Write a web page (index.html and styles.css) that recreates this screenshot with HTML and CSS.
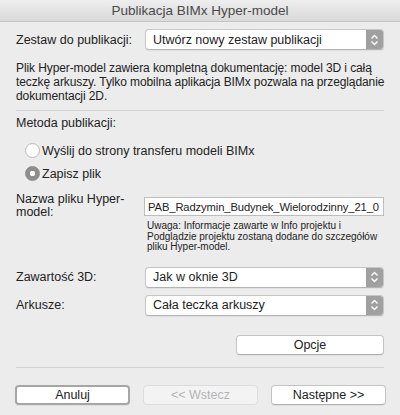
FILE: index.html
```html
<!DOCTYPE html>
<html>
  <head>
    <title>Publikacja BIMx Hyper-model</title>
    <link rel="stylesheet" href="styles.css">
  </head>
  <body>
    <div class="window">
      <!-- Title bar -->
      <div class="titlebar">Publikacja BIMx Hyper-model</div>

      <div class="content">
        <!-- Publication set -->
        <div class="row row-set">
          <span class="label">Zestaw do publikacji:</span>
          <div class="popup">
            <span class="popup-text">Utwórz nowy zestaw publikacji</span>
            <span class="stepper">
              <svg width="9" height="12" viewBox="0 0 9 12">
                <path d="M1.5 4.5 L4.5 1.5 L7.5 4.5 M1.5 7.5 L4.5 10.5 L7.5 7.5" fill="none" stroke="#fff" stroke-width="1.4"/>
              </svg>
            </span>
          </div>
        </div>

        <p class="description">
          Plik Hyper-model zawiera kompletną dokumentację: model 3D i całą<br>
          teczkę arkuszy. Tylko mobilna aplikacja BIMx pozwala na przeglądanie<br>
          dokumentacji 2D.
        </p>

        <div class="separator"></div>

        <!-- Method -->
        <div class="section-title">Metoda publikacji:</div>
        <div class="radio-group">
          <label class="radio">
            <span class="radio-dot"></span>
            Wyślij do strony transferu modeli BIMx
          </label>
          <label class="radio checked">
            <span class="radio-dot"></span>
            Zapisz plik
          </label>
        </div>

        <!-- File name -->
        <div class="row row-file">
          <span class="label label-wrap">Nazwa pliku Hyper-<br>model:</span>
          <div class="field-col">
            <div class="text-input">PAB_Radzymin_Budynek_Wielorodzinny_21_0</div>
            <p class="note">
              Uwaga: Informacje zawarte w Info projektu i<br>
              Podglądzie projektu zostaną dodane do szczegółów<br>
              pliku Hyper-model.
            </p>
          </div>
        </div>

        <div class="row row-3d">
          <span class="label">Zawartość 3D:</span>
          <div class="popup">
            <span class="popup-text">Jak w oknie 3D</span>
            <span class="stepper">
              <svg width="9" height="12" viewBox="0 0 9 12">
                <path d="M1.5 4.5 L4.5 1.5 L7.5 4.5 M1.5 7.5 L4.5 10.5 L7.5 7.5" fill="none" stroke="#fff" stroke-width="1.4"/>
              </svg>
            </span>
          </div>
        </div>

        <div class="row row-sheets">
          <span class="label">Arkusze:</span>
          <div class="popup">
            <span class="popup-text">Cała teczka arkuszy</span>
            <span class="stepper">
              <svg width="9" height="12" viewBox="0 0 9 12">
                <path d="M1.5 4.5 L4.5 1.5 L7.5 4.5 M1.5 7.5 L4.5 10.5 L7.5 7.5" fill="none" stroke="#fff" stroke-width="1.4"/>
              </svg>
            </span>
          </div>
        </div>

        <div class="options-row">
          <button class="button button-options">Opcje</button>
        </div>

        <div class="separator separator-bottom"></div>

        <!-- Footer buttons -->
        <div class="footer">
          <button class="button button-default">Anuluj</button>
          <button class="button" disabled>&lt;&lt; Wstecz</button>
          <button class="button">Następne &gt;&gt;</button>
        </div>
      </div>
    </div>
  </body>
</html>
```

FILE: styles.css
```css
body {
  margin: 0;
  padding: 0;
  font-family: "Liberation Sans", Arial, sans-serif;
  font-size: 12px;
  color: #222;
}
.window {
  width: 400px;
  height: 415px;
  background-color: #ececec;
  overflow: hidden;
}
.titlebar {
  height: 21px;
  line-height: 22px;
  text-align: center;
  font-size: 13.5px;
  color: #4a4a4a;
  background: linear-gradient(#eeeeee, #d9d9d9);
  border-bottom: 1px solid #c4c4c4;
}
.content {
  padding: 0 16px;
}
.row {
  display: grid;
  grid-template-columns: 129px minmax(0, 1fr);
  align-items: center;
}
.row-set {
  margin-top: 7px;
}
.popup {
  height: 19px;
  display: flex;
  align-items: center;
  justify-content: space-between;
  background-color: #fff;
  border: 1px solid #c6c6c6;
  border-bottom-color: #b4b4b4;
  border-radius: 4px;
  box-shadow: 0 1px 1px rgba(0, 0, 0, 0.06);
  overflow: hidden;
}
.popup-text {
  padding-left: 7px;
  font-size: 12.5px;
}
.stepper {
  width: 17px;
  height: 19px;
  display: flex;
  align-items: center;
  justify-content: center;
  background-color: #a0a0a0;
}
.description {
  margin: 11px 0 0;
  line-height: 14px;
  font-size: 12px;
  letter-spacing: -0.1px;
  white-space: nowrap;
}
.separator {
  height: 1px;
  background-color: #d3d3d3;
  margin-top: 7px;
}
.section-title {
  margin-top: 4px;
  line-height: 16px;
  font-size: 12.5px;
}
.radio-group {
  padding-left: 9px;
  margin-top: 8px;
}
.radio {
  display: flex;
  align-items: center;
  gap: 2px;
  height: 23px;
  font-size: 12.5px;
}
.radio-dot {
  width: 13px;
  height: 13px;
  border-radius: 50%;
  border: 1px solid #b8b8b8;
  background-color: #fff;
  box-sizing: content-box;
}
.radio.checked .radio-dot {
  background: radial-gradient(circle, #fff 0 2.5px, #8d8d8d 3px);
  border-color: #8d8d8d;
}
.row-file {
  align-items: start;
  margin-top: 12px;
}
.label {
  font-size: 12.5px;
}
.label-wrap {
  line-height: 13px;
  margin-top: -4px;
}
.field-col {
  margin-left: -1px;
}
.text-input {
  height: 17px;
  line-height: 18px;
  padding-left: 3px;
  background-color: #fff;
  border: 1px solid #bdbdbd;
  white-space: nowrap;
  overflow: hidden;
  font-size: 11.2px;
  letter-spacing: -0.1px;
}
.note {
  margin: 5px 0 0 3px;
  font-size: 10px;
  line-height: 10.5px;
  white-space: nowrap;
}
.row-3d {
  margin-top: 14px;
}
.row-sheets {
  margin-top: 7px;
}
.options-row {
  display: flex;
  justify-content: flex-end;
  margin-top: 19px;
}
.button {
  box-sizing: border-box;
  font-family: inherit;
  font-size: 12.5px;
  color: #222;
  height: 20px;
  background-color: #fff;
  border: 1px solid #c4c4c4;
  border-bottom-color: #b0b0b0;
  border-radius: 4px;
  box-shadow: 0 1px 1px rgba(0, 0, 0, 0.05);
  padding: 0;
}
.button-options {
  width: 148px;
}
.separator-bottom {
  margin-top: 12px;
}
.footer {
  display: flex;
  justify-content: space-between;
  margin: 17px -2px 0 -1px;
}
.footer .button {
  width: 115px;
}
.button-default {
  border: 2px solid #a6a6a6;
}
.button:disabled {
  background-color: #f3f3f3;
  border-color: #dcdcdc;
  color: #b3b3b3;
  box-shadow: none;
}
```
